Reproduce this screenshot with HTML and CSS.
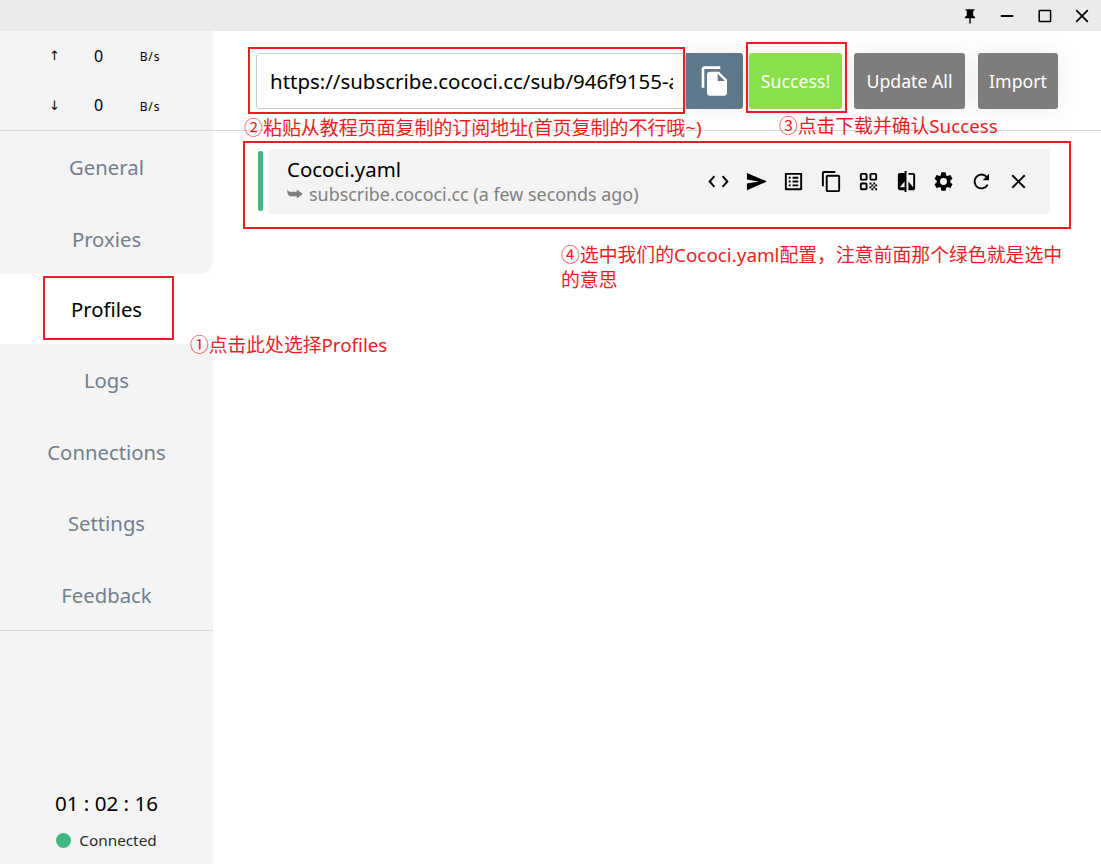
FILE: index.html
```html
<!DOCTYPE html>
<html lang="zh-CN">
<head>
<meta charset="utf-8">
<title>Profiles</title>
<link rel="stylesheet" href="styles.css">
</head>
<body>
<div class="window">
  <header class="titlebar">
    <svg class="win-icon" viewBox="0 0 16 16"><path d="M3.600 1.200h8.800v1.600h-1.200v4.600l1.900 1.500v1.400H8.700v5.200H7.300v-5.200H2.900V8.900l1.900-1.500V2.800H3.600z"/></svg>
    <svg class="win-icon" viewBox="0 0 16 16"><path d="M1.800 8h12.400" class="line"/></svg>
    <svg class="win-icon" viewBox="0 0 16 16"><rect x="2.200" y="2.500" width="11.400" height="11" rx=".6" class="line thin"/></svg>
    <svg class="win-icon" viewBox="0 0 16 16"><path d="M2.200 2.200l11.600 11.600M13.800 2.200L2.200 13.800" class="line close"/></svg>
  </header>
  <div class="body">
    <aside class="sidebar">
      <div class="traffic">
        <div class="rate"><span class="arrow">↑</span><span class="value">0</span><span class="unit">B/s</span></div>
        <div class="rate"><span class="arrow">↓</span><span class="value">0</span><span class="unit">B/s</span></div>
      </div>
      <nav class="menu">
        <a class="item">General</a>
        <a class="item before-active">Proxies</a>
        <a class="item active">Profiles</a>
        <a class="item">Logs</a>
        <a class="item">Connections</a>
        <a class="item">Settings</a>
        <a class="item">Feedback</a>
      </nav>
      <div class="status">
        <div class="clock">01 : 02 : 16</div>
        <div class="connection"><i class="dot"></i><span>Connected</span></div>
      </div>
    </aside>
    <main class="main">
      <div class="toolbar">
        <div class="url"><span class="url-text">https://subscribe.cococi.cc/sub/946f9155-a</span></div>
        <button class="paste"><svg viewBox="0 0 24 24"><path d="M16 1H4c-1.100 0-2 .9-2 2v14h2V3h12V1zm-1 4l6 6v10c0 1.100-.9 2-2 2H7.990C6.890 23 6 22.100 6 21l.01-14c0-1.100.89-2 1.990-2h7zm-1 7h5.500L14 6.500V12z"/></svg></button>
        <button class="btn success">Success!</button>
        <button class="btn update">Update All</button>
        <button class="btn import">Import</button>
      </div>
      <div class="profile">
        <i class="marker"></i>
        <div class="card">
          <div class="info">
            <div class="name">Cococi.yaml</div>
            <div class="source"><svg class="hook" viewBox="0 0 16 12"><path d="M.3 1.200C1 3.300 2.200 3.700 4 3.700h5.800V1.400L15.800 6l-6 4.600V8.300H4C1.500 8.300 0 5.500.3 1.200z"/></svg><span>subscribe.cococi.cc (a few seconds ago)</span></div>
          </div>
          <div class="actions">
            <svg viewBox="0 0 24 24"><path class="line" d="M7.700 6.500L2.800 12l4.900 5.500M16.300 6.500l4.900 5.500-4.900 5.500"/></svg>
            <svg viewBox="0 0 24 24"><path d="M2 3l20 8.600v.8L2 21V14l12-2-12-2z"/></svg>
            <svg viewBox="0 0 24 24"><path d="M19 5v14H5V5h14m1.100-2H3.900c-.5 0-.9.4-.9.9v16.200c0 .4.4.9.9.9h16.200c.4 0 .9-.5.9-.9V3.900c0-.5-.5-.9-.9-.9zM11 7h6v2h-6V7zm0 4h6v2h-6v-2zm0 4h6v2h-6zM7 7h2v2H7zm0 4h2v2H7zm0 4h2v2H7z"/></svg>
            <svg viewBox="0 0 24 24"><path d="M16 1H4c-1.100 0-2 .9-2 2v14h2V3h12V1zm3 4H8c-1.100 0-2 .9-2 2v14c0 1.100.9 2 2 2h11c1.100 0 2-.9 2-2V7c0-1.100-.9-2-2-2zm0 16H8V7h11v14z"/></svg>
            <svg viewBox="0 0 24 24"><g class="line"><rect x="4" y="4" width="6" height="6" rx="1"/><rect x="14" y="4" width="6" height="6" rx="1"/><rect x="4" y="14" width="6" height="6" rx="1"/></g><path d="M13 13h2v2h-2zM15 15h2v2h-2zM13 17h2v2h-2zM15 19h2v2h-2zM17 17h2v2h-2zM17 13h2v2h-2zM19 15h2v2h-2zM19 19h2v2h-2z"/></svg>
            <svg viewBox="0 0 24 24"><path d="M10 3H5c-1.100 0-2 .9-2 2v14c0 1.100.9 2 2 2h5v2h2V1h-2v2zm0 15H5l5-6v6zm9-15h-5v2h5v13l-5-6v9h5c1.100 0 2-.9 2-2V5c0-1.100-.9-2-2-2z"/></svg>
            <svg viewBox="0 0 24 24"><path d="M19.140 12.940c.04-.3.060-.61.060-.94s-.02-.64-.07-.94l2.030-1.580c.18-.14.230-.41.120-.61l-1.920-3.320c-.12-.22-.37-.29-.59-.22l-2.390.96c-.5-.38-1.030-.7-1.620-.94L14.400 2.810c-.04-.24-.24-.41-.48-.41h-3.840c-.24 0-.43.17-.47.41l-.36 2.540c-.59.24-1.130.57-1.620.94l-2.390-.96c-.22-.08-.47 0-.59.22L2.740 8.870c-.12.21-.08.47.12.61l2.030 1.580c-.05.3-.09.63-.09.94s.02.64.07.94l-2.030 1.580c-.18.14-.23.41-.12.61l1.920 3.320c.12.22.37.29.59.22l2.390-.96c.5.38 1.030.7 1.620.94l.36 2.540c.05.24.24.41.48.41h3.840c.24 0 .44-.17.47-.41l.36-2.540c.59-.24 1.130-.56 1.620-.94l2.390.96c.22.08.47 0 .59-.22l1.920-3.320c.12-.22.070-.47-.12-.61zM12 15.600A3.600 3.600 0 1 1 12 8.400a3.600 3.600 0 0 1 0 7.200z"/></svg>
            <svg viewBox="0 0 24 24"><path class="line" d="M18.400 15.300A7.200 7.200 0 1 1 17.400 7.200"/><path d="M19.800 4v6.700h-6.500z"/></svg>
            <svg viewBox="0 0 24 24"><path class="line" d="M5.500 5.500l13 13M18.500 5.500l-13 13"/></svg>
          </div>
        </div>
      </div>
    </main>
  </div>
  <div class="frame frame-menu"></div>
  <div class="frame frame-url"></div>
  <div class="frame frame-success"></div>
  <div class="frame frame-profile"></div>
  <div class="note note-1">①点击此处选择<span>Profiles</span></div>
  <div class="note note-2">②粘贴从教程页面复制的订阅地址<span>(</span>首页复制的不行哦<span>~)</span></div>
  <div class="note note-3">③点击下载并确认<span>Success</span></div>
  <div class="note note-4">④选中我们的<span>Cococi.yaml</span>配置，注意前面那个绿色就是选中<br>的意思</div>
</div>
</body>
</html>
```

FILE: styles.css
```css
* { box-sizing: border-box; }
body {
  margin: 0;
  font-family: "Noto Sans", "Noto Sans CJK SC", sans-serif;
  color: #000;
  background: #fff;
}
.window {
  position: relative;
  width: 1101px;
  height: 864px;
  display: flex;
  flex-direction: column;
  overflow: hidden;
}
.line { fill: none; stroke: #000; stroke-width: 2; }
.thin { stroke-width: 1.5; }
.close { stroke-width: 1.7; }
.titlebar {
  height: 31px;
  background: #eaeaea;
  display: flex;
  align-items: center;
  justify-content: flex-end;
  gap: 21.5px;
  padding-right: 11px;
}
.win-icon { width: 16px; height: 16px; }
.body { flex: 1; display: flex; min-height: 0; }
.sidebar { width: 213px; background: #f4f4f4; display: flex; flex-direction: column; }
.traffic {
  height: 100px;
  border-bottom: 1px solid #d8d8d8;
  display: flex;
  flex-direction: column;
}
.rate {
  height: 50px;
  display: grid;
  grid-template-columns: 55px 33px 70px;
  justify-content: start;
  align-items: center;
  padding-left: 27px;
  text-align: center;
}
.arrow { font-family: "DejaVu Sans", sans-serif; font-size: 13px; }
.value { font-size: 16px; }
.unit { font-size: 12px; letter-spacing: .9px; padding-top: 2px; }
.menu { height: 500px; border-bottom: 1px solid #d8d8d8; display: flex; flex-direction: column; }
.item {
  flex: 1;
  display: flex;
  align-items: center;
  justify-content: center;
  padding-top: 1px;
  font-size: 20.3px;
  color: #73808c;
}
.active { background: #fff; color: #000; padding-top: 0; }
.before-active { background: #f4f4f4; border-radius: 0 0 13px 0; box-shadow: 13px 13px 0 #fff; clip-path: inset(0); }
.status { flex: 1; display: flex; flex-direction: column; justify-content: flex-end; align-items: center; padding-bottom: 13px; }
.clock { font-size: 20.6px; line-height: 28px; margin-bottom: 12px; }
.connection { display: flex; align-items: center; gap: 8px; font-size: 15.300px; line-height: 22px; color: #2c2c2c; }
.dot { width: 15px; height: 15px; border-radius: 50%; background: #41b883; }
.main { flex: 1; display: flex; flex-direction: column; min-width: 0; }
.toolbar {
  height: 100px;
  border-bottom: 1px solid #d8d8d8;
  padding: 22px 43px 0 43px;
  display: flex;
  align-items: flex-start;
}
.url {
  width: 430px;
  height: 56px;
  border: 1px solid #ccc;
  border-radius: 3px;
  padding: 0 12px 0 13px;
  display: flex;
  align-items: center;
  font-size: 20.450px;
}
.url-text { flex: 1; overflow: hidden; white-space: nowrap; }
button { border: 0; height: 56px; padding: 0; font-family: inherit; font-size: 17.700px; color: #fff; box-shadow: 0 0 24px rgba(0, 0, 0, .08); }
.paste { width: 57px; background: #5f788b; border-radius: 0 3px 3px 0; display: flex; align-items: center; justify-content: center; }
.paste svg { width: 32px; height: 32px; fill: #fff; }
.btn { background: #7f7d7b; border-radius: 3px; white-space: nowrap; }
.success { width: 93px; margin-left: 6px; background: #8adf4d; }
.update { width: 111px; margin-left: 12px; }
.import { width: 80px; margin-left: 13px; }
.profile { display: flex; align-items: center; gap: 5px; padding: 18px 51px 0 45px; }
.marker { width: 5px; height: 60px; margin-bottom: 1px; border-radius: 2px; background: #41b883; }
.card {
  flex: 1;
  height: 65px;
  border-radius: 4px;
  background: #f3f3f3;
  display: flex;
  align-items: center;
  justify-content: space-between;
  padding: 0 20px 0 19px;
}
.name { font-size: 20.400px; line-height: 25px; }
.source { display: flex; align-items: center; gap: 6px; font-size: 17.900px; line-height: 24px; color: #808080; white-space: nowrap; }
.hook { width: 16px; height: 12px; fill: #808080; }
.actions { display: flex; gap: 14.5px; }
.actions svg { width: 23px; height: 23px; flex: none; }
.frame { position: absolute; border: 2px solid #ed1c24; }
.frame-menu { left: 43px; top: 276px; width: 131px; height: 64px; }
.frame-url { left: 248px; top: 47px; width: 437px; height: 67px; }
.frame-success { left: 746px; top: 42px; width: 101px; height: 71px; }
.frame-profile { left: 243px; top: 141px; width: 828px; height: 88px; }
.note {
  position: absolute;
  font-family: "Noto Sans CJK SC", sans-serif;
  font-size: 18.800px;
  line-height: 24px;
  color: #ed1c24;
  white-space: nowrap;
}
.note span { font-family: "Noto Sans", sans-serif; }
.note-1 { left: 190px; top: 332px; }
.note-2 { left: 244px; top: 115px; font-size: 18.950px; }
.note-3 { left: 779px; top: 113px; }
.note-4 { left: 561px; top: 242px; font-size: 18.850px; }
```
